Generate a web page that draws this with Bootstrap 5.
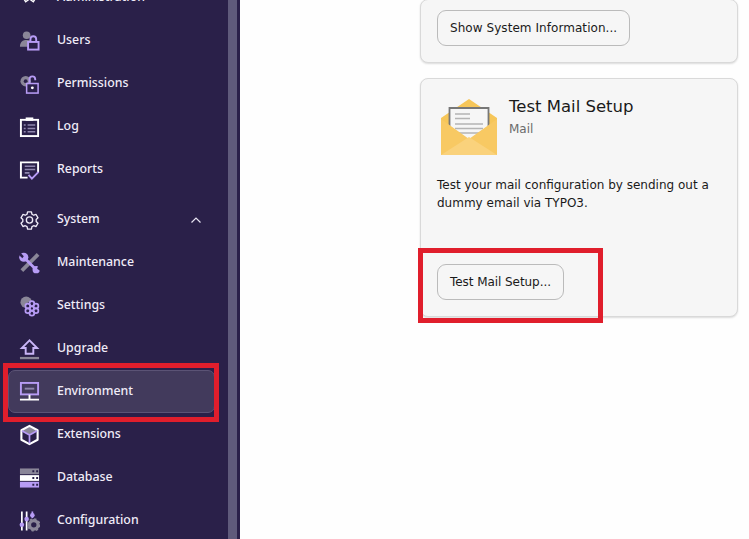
<!DOCTYPE html>
<html lang="en"><head><meta charset="utf-8"><title>Environment</title>
<link href="https://cdn.jsdelivr.net/npm/bootstrap@5.3.0/dist/css/bootstrap.min.css" rel="stylesheet">
<style>
html,body{height:100%;overflow:hidden}
body{background:#fefefe;position:relative;font-family:"DejaVu Sans",sans-serif;color:#1a1a1a}
.shell{height:539px;overflow:hidden}
.side{width:228px;background:#2a2049;flex:none;overflow:hidden;font-family:"Noto Sans",sans-serif;font-size:12.35px;color:#f0ecf8}
.track{width:12px;flex:none;background:linear-gradient(90deg,#5f5a7b 0 9px,#2a2049 9px)}
.navlist{margin-top:-24px;padding:0 13px 0 8px;list-style:none}
.navit{height:43px;display:flex;align-items:center;padding-left:10px;border:1px solid transparent;border-radius:7px;font-weight:500;line-height:1}
.navit svg{width:21px;height:22px;flex:none;margin-right:17px}
.navit.gapped{margin-top:7px}
.navit.on{background:#423a5c;border-color:#5b5375}
.navit svg.chev{width:10px;height:6px;margin:0 0 0 auto;position:relative;right:13px}
.mainpane{padding-left:180px;padding-right:11px;flex:1}
.toolcard{background:#f6f6f6;border:1px solid #d9d9d9;border-radius:8px;box-shadow:0 1px 2px rgba(0,0,0,.14);padding:0 16px;width:318px;font-size:12px}
.first{height:64px;margin-top:-1px;padding-top:10px}
.second{height:239px;margin-top:15px;padding-top:20px}
.tbtn{height:36px;background:#f6f6f6;border:1px solid #bbb;border-radius:9px;font-size:12px;line-height:1;padding:0 12px;color:#1a1a1a;display:inline-flex;align-items:center;letter-spacing:.005em}
.tbtn.tight{letter-spacing:-.06px}
.mailico{width:56px;height:56px;margin-left:4px;margin-right:12px;flex:none}
.tt{font-size:16.5px;line-height:1;margin:0;font-weight:400}
.ts{font-size:12px;color:#6b6b6b;line-height:1;margin-top:7px}
.tb{line-height:18px;margin:21px 0 0;height:88px}
.redbox{position:absolute;border:5px solid #e01e2c;pointer-events:none}
.rb1{left:3px;top:363px;width:216px;height:59px}
.rb2{left:418px;top:248px;width:185px;height:75px}
</style></head>
<body>
<div class="d-flex shell">
<nav class="side">
<ul class="navlist">
<li class="navit"><svg viewBox="0 0 22 22"><path fill="none" stroke="#fff" stroke-width="1.5" d="M4 10l3 5 4-3 4 3 3-5"/></svg>Administration</li>
<li class="navit"><svg viewBox="0 0 22 22"><circle cx="8" cy="5" r="4" fill="#8a8698"/><path fill="#8a8698" d="M1 17c0-5 3-7 7-7s5 1 5 2v5z"/><rect x="9.500" y="12" width="11" height="8" fill="#2a2049" stroke="#b79cf5" stroke-width="2"/><path fill="none" stroke="#b79cf5" stroke-width="2" d="M12 12V9a3 3 0 016 0v3"/></svg>Users</li>
<li class="navit"><svg viewBox="0 0 22 22"><circle cx="7" cy="8" r="5.500" fill="#8a8698"/><circle cx="7" cy="8" r="2" fill="#2a2049"/><rect x="8" y="10.500" width="12" height="10" fill="#2a2049" stroke="#b79cf5" stroke-width="1.600"/><path fill="none" stroke="#b79cf5" stroke-width="2" d="M11 10V6a3 3 0 016 0v1"/><circle cx="14" cy="15" r="1.500" fill="#fff"/></svg>Permissions</li>
<li class="navit"><svg viewBox="0 0 22 22"><rect x="2" y="3.500" width="18" height="17" fill="none" stroke="#fff" stroke-width="2"/><rect x="7" y="1" width="8" height="3.500" fill="#fff"/><path stroke="#8f86ad" stroke-width="1.600" d="M5 9h2M9 9h8M5 12.500h2M9 12.500h8M5 16h2M9 16h8"/></svg>Log</li>
<li class="navit"><svg viewBox="0 0 22 22"><path fill="none" stroke="#fff" stroke-width="2" d="M9 19H2V3h18v10"/><path stroke="#8f86ad" stroke-width="1.600" d="M6 7h11M6 10.500h11M6 14h5"/><path fill="none" stroke="#b79cf5" stroke-width="2" d="M10 16l3.500 4 7-7"/></svg>Reports</li>
<li class="navit gapped"><svg viewBox="0 0 22 22"><path fill="none" stroke="#f0ecf8" stroke-width="1.400" stroke-linejoin="round" d="M9 2.500h4l.6 2.500 1.800 1 2.500-.8 2 3.500-1.900 1.800v2l1.900 1.800-2 3.500-2.500-.8-1.800 1-.6 2.500H9l-.6-2.500-1.800-1-2.500.8-2-3.500 1.900-1.800v-2L2.100 8.700l2-3.500 2.500.8 1.800-1z"/><circle cx="11" cy="11" r="3.300" fill="none" stroke="#f0ecf8" stroke-width="1.400"/></svg>System<svg class="chev" viewBox="0 0 10 6"><path fill="none" stroke="#e8e4f2" stroke-width="1.200" d="M.5 5.500L5 1l4.500 4.500"/></svg></li>
<li class="navit"><svg viewBox="0 0 22 22"><path stroke="#8a8698" stroke-width="4" d="M20 2L3 19"/><path stroke="#b79cf5" stroke-width="3" d="M6 6l12 12"/><circle cx="5" cy="5" r="4.800" fill="#b79cf5"/><path fill="#2a2049" d="M1.500 0L5 4 3.500 6 0 2.500z"/><circle cx="18" cy="18" r="3.800" fill="#b79cf5"/><path fill="#2a2049" d="M22 19l-3-2 1-3 2 1z"/></svg>Maintenance</li>
<li class="navit"><svg viewBox="0 0 22 22"><circle cx="7.500" cy="7" r="6" fill="#8a8698"/><circle cx="13.500" cy="13.500" r="7.500" fill="#2a2049"/><g fill="none" stroke="#b79cf5" stroke-width="1.800"><circle cx="13.500" cy="8.500" r="2.500"/><circle cx="13.500" cy="18.500" r="2.500"/><circle cx="9.200" cy="11" r="2.500"/><circle cx="17.800" cy="11" r="2.500"/><circle cx="9.200" cy="16" r="2.500"/><circle cx="17.800" cy="16" r="2.500"/></g><circle cx="13.500" cy="13.500" r="2" fill="none" stroke="#b79cf5" stroke-width="1.500"/></svg>Settings</li>
<li class="navit"><svg viewBox="0 0 22 22"><path fill="none" stroke="#c9b5f7" stroke-width="2" d="M11 2L3 10h4v6h8v-6h4z"/><path stroke="#8a8698" stroke-width="2.400" d="M1 20.500h20"/></svg>Upgrade</li>
<li class="navit on"><svg viewBox="0 0 22 22"><rect x="2" y="1.500" width="18" height="12" fill="none" stroke="#b79cf5" stroke-width="2"/><path stroke="#8f86ad" stroke-width="2" d="M6 7.500h10"/><path stroke="#fff" stroke-width="2" d="M11 14v5M1 19h20"/></svg>Environment</li>
<li class="navit"><svg viewBox="0 0 22 22"><path fill="#8a8698" d="M11 2l8 4-8 4.500L3 6z"/><path fill="none" stroke="#fff" stroke-width="2.200" stroke-linejoin="round" d="M11 1.500l8.500 4.500v10L11 20.500 2.500 16V6z"/><path fill="none" stroke="#b79cf5" stroke-width="1.800" d="M3 6.500L11 11l8-4.500M11 11v9"/></svg>Extensions</li>
<li class="navit"><svg viewBox="0 0 22 22"><rect x="1" y="1" width="20" height="6" fill="#8a8698"/><rect x="1" y="8" width="20" height="6" fill="#fff"/><rect x="1" y="15" width="20" height="6" fill="#b79cf5"/><path stroke="#2a2049" stroke-width="2" d="M14 4h2M18 4h2M14 11h2M18 11h2M14 18h2M18 18h2"/></svg>Database</li>
<li class="navit"><svg viewBox="0 0 22 22"><path stroke="#fff" stroke-width="1.800" d="M3 1v20M8 1v20"/><circle cx="3" cy="15" r="2.400" fill="#b79cf5"/><circle cx="8" cy="9" r="2.400" fill="#b79cf5"/><path stroke="#b79cf5" stroke-width="1.800" d="M14 1v7"/><circle cx="14" cy="5" r="2.400" fill="#b79cf5"/><circle cx="15.500" cy="15" r="4.500" fill="none" stroke="#8a8698" stroke-width="3.400"/><circle cx="15.500" cy="15" r="6.200" fill="none" stroke="#8a8698" stroke-width="1.600" stroke-dasharray="2.500 2.300"/></svg>Configuration</li>
</ul>
</nav>
<div class="track"></div>
<main class="mainpane">
<section class="toolcard first"><button class="tbtn" type="button">Show System Information...</button></section>
<section class="toolcard second">
<div class="d-flex">
<svg class="mailico" viewBox="0 0 56 56"><path fill="#f6c659" d="M0 19L28 0l28 19v37H0z"/><rect x="8" y="8" width="40" height="24" fill="#f6f6f6"/><path fill="#f6f6f6" d="M8 30h40v3L28 41 8 33z"/><path fill="none" stroke="#777" stroke-width="1.800" d="M8.500 33V9h39v24"/><path stroke="#b4b4b4" stroke-width="1.600" d="M14 15h15M14 19.500h15M14 25h28M14 29.500h28M16 34h24"/><path fill="#f8c963" d="M0 20l28 20 28-20v36H0z"/><path fill="#fad27c" d="M0 56l28-18 28 18z"/></svg>
<div class="infoblock"><h2 class="tt">Test Mail Setup</h2><div class="ts">Mail</div></div>
</div>
<p class="tb">Test your mail configuration by sending out a dummy email via TYPO3.</p>
<button class="tbtn tight" type="button">Test Mail Setup...</button>
</section>
</main>
</div>
<div class="redbox rb1"></div>
<div class="redbox rb2"></div>
<script src="https://cdn.jsdelivr.net/npm/bootstrap@5.3.0/dist/js/bootstrap.bundle.min.js"></script>
</body></html>
